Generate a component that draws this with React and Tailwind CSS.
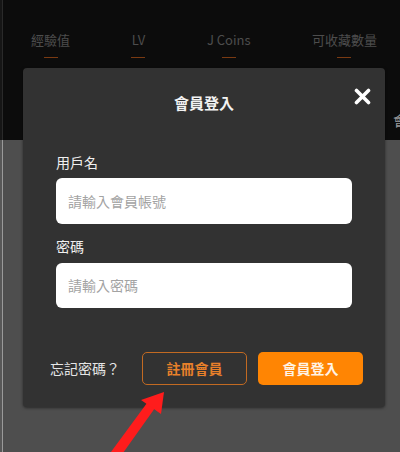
import React from 'react';

const font = { fontFamily: '"Noto Sans CJK TC", "Noto Sans", sans-serif' };

const stats = ['經驗值', 'LV', 'J Coins', '可收藏數量'];

export default function App() {
    return (
        <div className="relative w-[400px] h-[452px] overflow-hidden bg-[#0c0c0c]" style={font}>
            {/* page behind the overlay */}
            <div className="flex flex-col h-full">
                <div className="h-[140px] flex">
                    <div className="w-[2px] bg-[#161616]" />
                    <div className="w-px bg-[#2a2a2a]" />
                    <div className="flex-1 flex justify-between items-start pl-[28px] pr-[23px] pt-[30px]">
                        {stats.map((s) => (
                            <div key={s} className="flex flex-col items-center">
                                <span className="text-[13px] leading-[20px] text-[#4d4d4d]">{s}</span>
                                <span className="mt-[7px] w-[14px] h-px bg-[#7a3a12]" />
                            </div>
                        ))}
                    </div>
                </div>
                <div className="flex-1 flex bg-[#4e4e4e]">
                    <div className="w-[2px] bg-[#585858]" />
                    <div className="w-px bg-[#9a9a9a]" />
                    <div className="flex-1" />
                </div>
            </div>

            <span className="absolute left-[393px] top-[110px] text-[14px] text-[#9a9a9a]">會</span>

            {/* login dialog */}
            <div className="absolute left-[23px] top-[68px] w-[362px] h-[339px] rounded-[4px] bg-[#323232] shadow-[0_1px_3px_rgba(0,0,0,0.5)] flex flex-col">
                <div className="relative h-[70px] flex items-center justify-center">
                    <span className="text-[15px] font-bold text-[#f2f2f2]">會員登入</span>
                    <svg className="absolute left-[331px] top-[20px]" width="17" height="17" viewBox="0 0 17 17">
                        <path d="M2.5 2.5 L14.5 14.5 M14.5 2.5 L2.5 14.5" stroke="#ffffff" strokeWidth="3.6" strokeLinecap="round" />
                    </svg>
                </div>
                <div className="px-[33px] flex flex-col">
                    <span className="mt-[14px] text-[14px] leading-[20px] text-[#f0f0f0]">用戶名</span>
                    <div className="mt-[6px] h-[46px] rounded-[6px] bg-white flex items-center px-[12px]">
                        <span className="text-[14px] text-[#a3a3a3]">請輸入會員帳號</span>
                    </div>
                    <span className="mt-[12px] text-[14px] leading-[20px] text-[#f0f0f0]">密碼</span>
                    <div className="mt-[7px] h-[45px] rounded-[6px] bg-white flex items-center px-[12px]">
                        <span className="text-[14px] text-[#a3a3a3]">請輸入密碼</span>
                    </div>
                </div>
                <div className="mt-[44px] pl-[27px] pr-[22px] flex items-center">
                    <span className="text-[14px] text-[#e6e6e6] w-[92px]">忘記密碼？</span>
                    <div className="w-[105px] h-[33px] rounded-[5px] border-[1.5px] border-[#c26a22] flex items-center justify-center">
                        <span className="text-[14px] font-bold text-[#e8802a]">註冊會員</span>
                    </div>
                    <div className="ml-[11px] w-[105px] h-[33px] rounded-[5px] bg-[#ff8503] flex items-center justify-center">
                        <span className="text-[14px] font-bold text-[#fff3e6]">會員登入</span>
                    </div>
                </div>
            </div>

            {/* red arrow */}
            <svg className="absolute left-0 top-0 pointer-events-none" width="400" height="452" viewBox="0 0 400 452">
                <path d="M108 456 L147 403 L155 408 L118 460 Z" fill="#ff1c1c" />
                <path d="M164 392 L141 400 L161 414 Z" fill="#ff1c1c" />
            </svg>
        </div>
    );
}
